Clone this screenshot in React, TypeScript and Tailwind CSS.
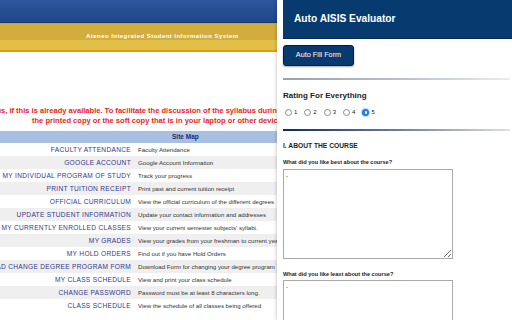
import React from "react";

const links: [string, string][] = [
  ["FACULTY ATTENDANCE", "Faculty Attendance"],
  ["GOOGLE ACCOUNT", "Google Account Information"],
  ["MY INDIVIDUAL PROGRAM OF STUDY", "Track your progress"],
  ["PRINT TUITION RECEIPT", "Print past and current tuition receipt"],
  ["OFFICIAL CURRICULUM", "View the official curriculum of the different degrees"],
  ["UPDATE STUDENT INFORMATION", "Update your contact information and addresses"],
  ["MY CURRENTLY ENROLLED CLASSES", "View your current semester subjects' syllabi."],
  ["MY GRADES", "View your grades from your freshman to current year"],
  ["MY HOLD ORDERS", "Find out if you have Hold Orders"],
  ["DOWNLOAD CHANGE DEGREE PROGRAM FORM", "Download Form for changing your degree program"],
  ["MY CLASS SCHEDULE", "View and print your class schedule"],
  ["CHANGE PASSWORD", "Password must be at least 8 characters long."],
  ["CLASS SCHEDULE", "View the schedule of all classes being offered"],
];

function AisisPage() {
  return (
    <div className="w-[277px] h-full shrink-0 overflow-hidden bg-white font-['Liberation_Sans',Arial,sans-serif]">
      {/* header bands */}
      <div className="h-[22px] bg-gradient-to-b from-[#2d579c] to-[#1f4788]" />
      <div className="h-[1px] bg-[#16397a]" />
      <div className="h-[1px] bg-[#e59f0c]" />
      <div className="h-[16px] bg-[#d2ad3d] flex items-end pl-[86px]">
        <span className="whitespace-nowrap text-white font-bold text-[6px] leading-[8px] tracking-[0.45px]">
          Ateneo Integrated Student Information System
        </span>
      </div>
      <div className="h-[10px] bg-[#e2bf46]" />
      <div className="h-[2px] bg-[#e69d05]" />

      {/* notice */}
      <div className="mt-[54px] text-[#ee1c1c] font-bold text-[7.55px] leading-[9.5px] whitespace-nowrap">
        <div className="-ml-[25px]">
          syllabus, if this is already available. To facilitate the discussion of the syllabus during class
        </div>
        <div className="pl-[32px]">
          the printed copy or the soft copy that is in your laptop or other devices
        </div>
      </div>

      {/* site map */}
      <div className="mt-[6px]">
        <div className="h-[12px] bg-[#a9bfe2] flex items-center pl-[172px]">
          <span className="text-[#1c2a78] font-bold text-[6.5px] whitespace-nowrap">Site Map</span>
        </div>
        {links.map(([label, desc], i) => (
          <div
            key={label}
            className={`h-[13px] flex items-center ${i % 2 === 1 ? "bg-[#efefef]" : "bg-white"}`}
          >
            <div className="w-[131px] shrink-0 flex justify-end">
              <span className="shrink-0 whitespace-nowrap text-[6.6px] tracking-[0.3px] text-[#33368f]">{label}</span>
            </div>
            <span className="ml-[7px] whitespace-nowrap text-[6.1px] text-[#333]">{desc}</span>
          </div>
        ))}
      </div>
    </div>
  );
}

function Radio({ n, checked }: { n: number; checked?: boolean }) {
  return (
    <div className="flex items-center gap-[2px]">
      {checked ? (
        <span className="w-[7px] h-[7px] rounded-full bg-[#1f7cf2] flex items-center justify-center shadow-[0_0_0_1px_rgba(31,124,242,0.3)]">
          <span className="w-[2.5px] h-[2.5px] rounded-full bg-white" />
        </span>
      ) : (
        <span className="w-[7px] h-[7px] rounded-full bg-white border border-[#8d8d8d]" />
      )}
      <span className="text-[6px] text-[#222]">{n}</span>
    </div>
  );
}

function Evaluator() {
  return (
    <div className="flex-1 h-full bg-white pl-[6px] shadow-[-1px_0_3px_rgba(0,0,0,0.18)] font-['Liberation_Sans',Arial,sans-serif] overflow-hidden">
      <div className="h-[39px] bg-[#073a6f] border-b border-[#042a55] flex items-center pl-[11px]">
        <span className="text-white font-bold text-[10.2px]">Auto AISIS Evaluator</span>
      </div>

      <button className="mt-[6px] w-[71px] h-[21px] rounded-[3px] bg-[#073a6f] border border-[#021f42] shadow-[0_1px_2px_rgba(0,0,0,0.35)] text-white text-[7.3px] flex items-center justify-center">
        Auto Fill Form
      </button>

      <div className="mt-[12px] mr-[2px] h-[2px] bg-gradient-to-r from-[#98a2b0] via-[#b7bec8] to-[#ececec]" />

      <div className="mt-[11px] text-[8px] leading-[10px] font-bold text-[#222]">Rating For Everything</div>

      <div className="mt-[7px] h-[9px] flex items-center gap-[7px] pl-[2px]">
        <Radio n={1} />
        <Radio n={2} />
        <Radio n={3} />
        <Radio n={4} />
        <Radio n={5} checked />
      </div>

      <div className="mt-[12px] mr-[2px] h-[2px] bg-gradient-to-r from-[#0c2c63] via-[#6d7d99] to-[#e2e2e2]" />

      <div className="mt-[10px] text-[6.7px] leading-[9px] font-bold text-[#222]">I. ABOUT THE COURSE</div>

      <div className="mt-[8.5px] text-[5.6px] leading-[7px] font-bold text-[#222]">
        What did you like best about the course?
      </div>
      <textarea
        readOnly
        defaultValue="."
        className="mt-[3.5px] block w-[170px] h-[90px] border border-[#a9a9a9] px-[2px] py-0 text-[7px] leading-[9px] text-black outline-none"
      />

      <div className="mt-[11.5px] text-[5.6px] leading-[7px] font-bold text-[#222]">
        What did you like least about the course?
      </div>
      <textarea
        readOnly
        defaultValue="."
        className="mt-[2.5px] block w-[170px] h-[90px] border border-[#a9a9a9] px-[2px] py-0 text-[7px] leading-[9px] text-black outline-none"
      />
    </div>
  );
}

export default function App() {
  return (
    <div className="w-[512px] h-[320px] flex overflow-hidden bg-white">
      <AisisPage />
      <Evaluator />
    </div>
  );
}
